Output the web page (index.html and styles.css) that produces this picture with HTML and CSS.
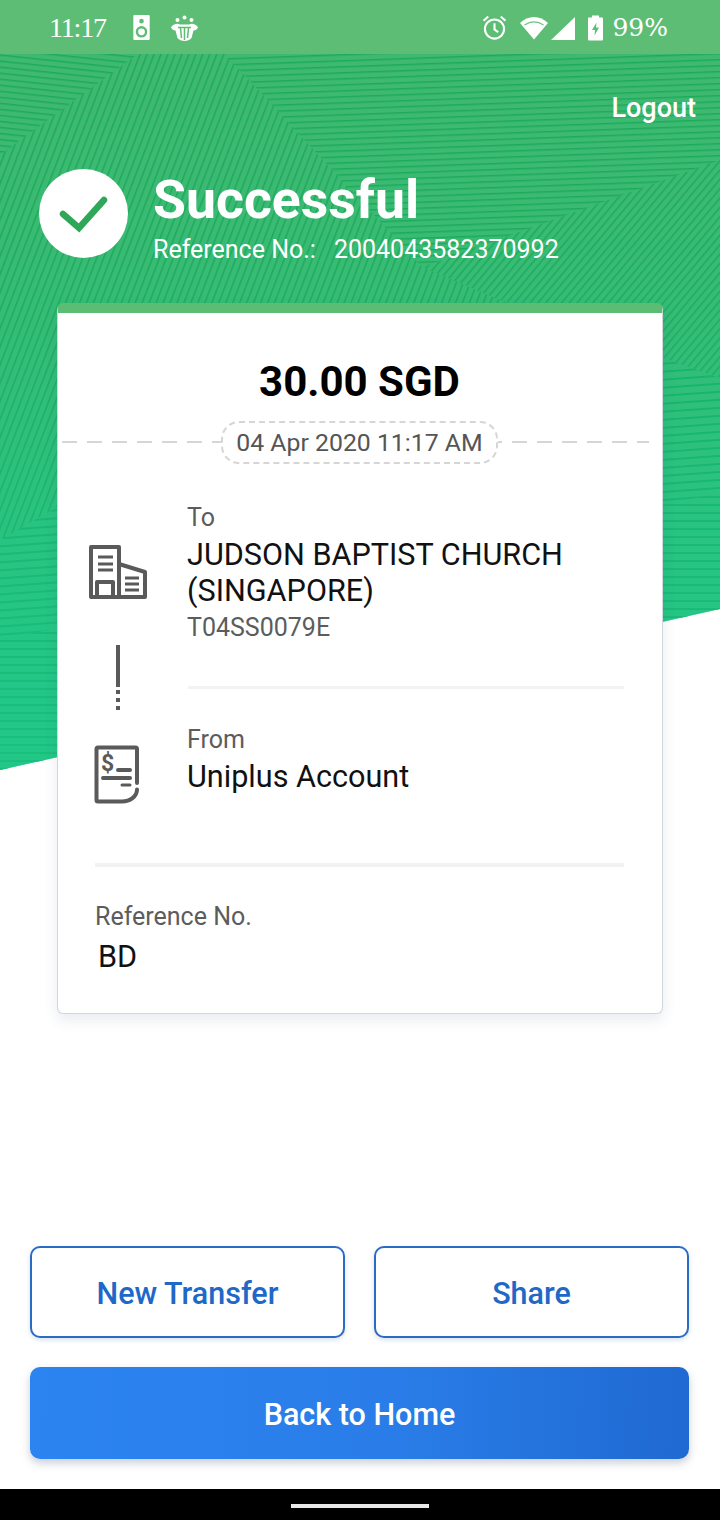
FILE: index.html
```html
<!DOCTYPE html>
<html lang="en">
<head>
<meta charset="utf-8">
<title>Transfer Successful</title>
<link rel="stylesheet" href="styles.css">
</head>
<body>
<div class="screen">
  <svg class="backdrop" width="720" height="720" viewBox="0 54 720 720" aria-hidden="true">
    <defs>
      <linearGradient id="bg" gradientUnits="userSpaceOnUse" x1="0" y1="54" x2="0" y2="770">
        <stop offset="0" stop-color="#40b870"/>
        <stop offset="0.45" stop-color="#35bc77"/>
        <stop offset="1" stop-color="#20c888"/>
      </linearGradient>
      <linearGradient id="fade" gradientUnits="userSpaceOnUse" x1="0" y1="250" x2="0" y2="770">
        <stop offset="0" stop-color="#20c888" stop-opacity="0"/>
        <stop offset="1" stop-color="#20c888" stop-opacity=".6"/>
      </linearGradient>
      <pattern id="topLeft" width="60" height="6" patternUnits="userSpaceOnUse" patternTransform="rotate(6)">
        <rect width="60" height="1.500" fill="#1cab5b"/>
      </pattern>
      <pattern id="topRight" width="60" height="6" patternUnits="userSpaceOnUse" patternTransform="rotate(-2)">
        <rect width="60" height="1.500" fill="#1cab5b"/>
      </pattern>
      <pattern id="centre" width="6.500" height="60" patternUnits="userSpaceOnUse" patternTransform="rotate(21)">
        <rect width="1.500" height="60" fill="#1cab5b"/>
      </pattern>
      <pattern id="midRight" width="6" height="60" patternUnits="userSpaceOnUse" patternTransform="rotate(40)">
        <rect width="1.500" height="60" fill="#1cab5b"/>
      </pattern>
      <pattern id="lower" width="60" height="8" patternUnits="userSpaceOnUse" patternTransform="rotate(-4)">
        <rect width="60" height="2" fill="#14b26a"/>
      </pattern>
      <pattern id="lowest" width="60" height="8" patternUnits="userSpaceOnUse">
        <rect width="60" height="2" fill="#14b26a"/>
      </pattern>
    </defs>
    <polygon points="0,54 720,54 720,609 0,770" fill="url(#bg)"/>
    <polygon points="0,54 138,54 0,155" fill="url(#topLeft)"/>
    <polygon points="225,54 720,54 720,160 422,267 335,173" fill="url(#topRight)"/>
    <polygon points="138,54 225,54 335,173 422,267 500,300 663,358 57,507 0,540 0,155" fill="url(#centre)"/>
    <polygon points="422,267 720,160 720,378 663,358 500,300" fill="url(#midRight)"/>
    <polygon points="0,540 57,507 663,358 720,378 720,493 0,640" fill="url(#lower)"/>
    <polygon points="0,640 720,493 720,609 0,770" fill="url(#lowest)"/>
    <polygon points="0,54 720,54 720,609 0,770" fill="url(#fade)"/>
  </svg>

  <header class="status">
    <div class="status-left">
      <span class="clock">11:17</span>
      <svg class="ico" width="18" height="25" viewBox="0 0 18 26"><path fill="#fff" fill-rule="evenodd" d="M1 0h15a1 1 0 0 1 1 1v24a1 1 0 0 1-1 1H1a1 1 0 0 1-1-1V1a1 1 0 0 1 1-1zm7.500 4a2.400 2.400 0 1 0 0 4.800a2.400 2.400 0 0 0 0-4.800zm0 7.500a6 6 0 1 0 0 12 6 6 0 0 0 0-12zm0 2.500a3.500 3.500 0 1 1 0 7 3.500 3.500 0 0 1 0-7z"/></svg>
      <svg class="ico ico-club" width="27" height="26" viewBox="0 0 27 26"><g fill="#fff"><circle cx="6.500" cy="5" r="2"/><circle cx="13.500" cy="2.500" r="2"/><circle cx="20.500" cy="5" r="2"/><path d="M0 12.500C2 9 6 8 9 9.500h9C21 8 25 9 27 12.500c-1 2-2.500 3-4.500 3l-2 7.500c-3 4-11 4-14 0l-2-7.500c-2 0-3.500-1-4.500-3z"/></g><g stroke="#5ebd75" stroke-width="1.500" fill="none"><path d="M7 12.500h13"/><path d="M9.500 13l1 10M13.500 13v12M17.500 13l-1 10"/></g></svg>
    </div>
    <div class="status-right">
      <svg width="25" height="25" viewBox="0 0 24 24" fill="none" stroke="#fff" stroke-width="2"><circle cx="12" cy="13.500" r="9.200"/><path d="M12 8v6l3.500 2.500M1.500 5.500 6 1.500M22.500 5.500 18 1.500"/></svg>
      <svg class="wifi" width="28" height="24" viewBox="0 0 28 24"><path fill="#fff" d="M14 23.500 0 7C4 3 9 1 14 1s10 2 14 6z"/><path fill="none" stroke="#5ebd75" stroke-width="1.300" d="M4.500 9c6-4 13-4 19 0" opacity=".9"/></svg>
      <svg class="signal" width="24" height="24" viewBox="0 0 24 24"><path fill="#fff" d="M24 1v23H0z"/></svg>
      <svg class="batt" width="15" height="26" viewBox="0 0 15 25"><path fill="#fff" fill-rule="evenodd" d="M4 0h7v2h3a1 1 0 0 1 1 1v21a1 1 0 0 1-1 1H1a1 1 0 0 1-1-1V3a1 1 0 0 1 1-1h3zm4.500 7L4 14.500h3L6.500 20 11 12H8z"/></svg>
      <span class="pct">99%</span>
    </div>
  </header>

  <div class="hero">
    <div class="logout">Logout</div>
    <div class="result">
      <div class="tick">
        <svg width="50" height="38" viewBox="0 0 50 38"><path d="M4 19l16 14L45 5" fill="none" stroke="#2ea858" stroke-width="6.500" stroke-linecap="round"/></svg>
      </div>
      <div class="result-text">
        <h1>Successful</h1>
        <p class="refline"><span>Reference No.:</span><span>2004043582370992</span></p>
      </div>
    </div>
  </div>

  <main class="card">
    <div class="amount">30.00 SGD</div>
    <div class="date-row"><span class="date">04 Apr 2020 11:17 AM</span></div>

    <section class="party party-to">
      <div class="party-icon">
        <svg width="60" height="54" viewBox="0 0 60 54" fill="none" stroke="#5a5a5a" stroke-width="4" stroke-linejoin="round"><path d="M2 2h28v50H2z"/><path d="M30 19l26 8v25H30"/><path d="M9 12h15M9 19h15M9 25h15" stroke-width="3"/><path d="M8 52V37h16v15"/><path d="M36 33h14M36 39h14M36 45h14" stroke-width="3"/></svg>
      </div>
      <div class="party-body">
        <div class="label">To</div>
        <div class="name">JUDSON BAPTIST CHURCH (SINGAPORE)</div>
        <div class="sub">T04SS0079E</div>
      </div>
    </section>

    <div class="connector-row">
      <div class="connector"></div>
      <div class="rule"></div>
    </div>

    <section class="party party-from">
      <div class="party-icon">
        <svg width="46" height="60" viewBox="0 0 46 60" fill="none" stroke="#5a5a5a" stroke-width="4" stroke-linejoin="round" stroke-linecap="round"><path d="M43 38V4a1.500 1.500 0 0 0-1.500-1.500H4A1.500 1.500 0 0 0 2.500 4v51A1.500 1.500 0 0 0 4 56.500h24c8 0 15-5 15-12"/><path d="M24 25h12M9 33h27"/><path d="M28 40h8" stroke-width="3"/><text x="7" y="26" class="dollar">$</text></svg>
      </div>
      <div class="party-body">
        <div class="label">From</div>
        <div class="name">Uniplus Account</div>
      </div>
    </section>

    <div class="note">
      <div class="label">Reference No.</div>
      <div class="name note-val">BD</div>
    </div>
  </main>

  <footer class="actions">
    <div class="action-row">
      <button class="btn btn-outline">New Transfer</button>
      <button class="btn btn-outline">Share</button>
    </div>
    <button class="btn btn-primary">Back to Home</button>
  </footer>

  <div class="navbar"><span class="pill"></span></div>
</div>
</body>
</html>
```
FILE: styles.css
```css
* { box-sizing: border-box; }
html, body { margin: 0; padding: 0; background: #fff; }
body { font-family: Roboto, "Liberation Sans", sans-serif; }
.screen { position: relative; width: 720px; height: 1520px; display: flex; flex-direction: column; overflow: hidden; }
.backdrop { position: absolute; left: 0; top: 54px; }
.status { position: relative; height: 54px; flex: none; background: #5ebd75; display: flex; justify-content: space-between; align-items: center; padding: 1px 52px 0 49px; color: #fff; }
.status-left, .status-right { display: flex; align-items: center; }
.clock { font-family: "Liberation Serif", "DejaVu Serif", serif; font-size: 28px; line-height: 30px; letter-spacing: -1.200px; }
.pct { font-family: "DejaVu Serif", serif; font-size: 25px; line-height: 30px; margin-left: 9px; }
.ico { margin-left: 27px; }
.ico-club { margin-left: 20px; }
.wifi { margin-left: 13px; }
.signal { margin-left: 3px; }
.batt { margin-left: 13px; }
.hero { position: relative; padding: 0 24px 0 39px; height: 249px; flex: none; color: #fff; }
.logout { text-align: right; font-size: 27px; font-weight: 500; line-height: 30px; padding-top: 39px; height: 115px; }
.result { display: flex; align-items: flex-start; gap: 25px; }
.tick { width: 89px; height: 89px; border-radius: 50%; background: #fff; display: flex; align-items: center; justify-content: center; flex: none; }
.result-text { padding-top: 3px; }
h1 { margin: 0; font-size: 53.600px; line-height: 56px; font-weight: 700; }
.refline { margin: 8px 0 0; font-size: 25px; line-height: 28px; display: flex; gap: 18px; }
.card { position: relative; width: 606px; height: 711px; margin-left: 57px; flex: none; background: #fff; border: 1px solid #d2d5dc; border-top: 10px solid #5bbc74; border-radius: 6px; box-shadow: 0 6px 14px rgba(70,90,130,.12); padding: 45px 38px 0 37px; }
.amount { text-align: center; font-size: 42px; line-height: 48px; font-weight: 700; color: #000; }
.date-row { position: relative; margin: 15px -33px 0 -33px; height: 44px; display: flex; justify-content: center; background: repeating-linear-gradient(90deg, #d6d6d6 0 15px, transparent 15px 25px) 0 20px / 587px 2px no-repeat; }
.date { padding: 0 13px; height: 43px; line-height: 40px; font-size: 24.800px; color: #555; background: #fff; border: 2px dashed #d6d6d6; border-radius: 18px; }
.party { display: flex; }
.party-icon { width: 92px; flex: none; display: flex; }
.party-to { margin-top: 38px; min-height: 183px; }
.party-to .party-icon { margin-left: -6px; width: 98px; padding-top: 42px; align-items: flex-start; }
.party-from { height: 177px; padding-top: 39px; }
.party-from .party-icon { margin-left: -1px; width: 93px; padding-top: 20px; align-items: flex-start; }
.party-body { flex: 1; }
.label { font-size: 25px; line-height: 30px; color: #5c5c5c; }
.name { font-size: 30.600px; line-height: 36px; color: #111; }
.party-to .name { margin-top: 4px; width: 400px; }
.party-from .name { margin-top: 4px; }
.sub { margin-top: 1px; font-size: 25px; line-height: 36px; color: #5c5c5c; }
.connector-row { display: flex; align-items: flex-start; height: 0; }
.connector { width: 4px; height: 66px; margin: -41px 0 0 21px; flex: none; background: linear-gradient(#5a5a5a, #5a5a5a) 0 0 / 4px 42px no-repeat, repeating-linear-gradient(#5a5a5a 0 4px, transparent 4px 8px) 0 45px / 4px 21px no-repeat; }
.rule { width: 436px; height: 3px; margin-left: 68px; background: #f2f2f2; }
.note { border-top: 4px solid #f2f2f2; padding-top: 35px; }
.note-val { margin: 7px 0 0 3px; }
.actions { flex: none; padding: 0 31px 0 30px; margin-top: 232px; display: flex; flex-direction: column; gap: 29px; }
.action-row { display: flex; gap: 29px; }
.btn { font-family: Roboto, "Liberation Sans", sans-serif; font-size: 30.500px; font-weight: 500; border-radius: 10px; cursor: pointer; padding: 2px 0 0; }
.btn-outline { flex: 1; height: 92px; background: #fff; color: #2068c8; border: 2px solid #2a6cc4; box-shadow: 0 2px 5px rgba(40,80,150,.18); }
.btn-primary { width: 100%; height: 92px; border: 0; color: #fff; background: linear-gradient(92deg, #2b84f1, #2a7de8 55%, #1f69d2); box-shadow: 0 4px 8px rgba(40,60,100,.25); }
.navbar { position: absolute; left: 0; right: 0; bottom: 0; height: 31px; background: #000; display: flex; justify-content: center; }
.pill { width: 138px; height: 4px; margin-top: 15px; background: #e8e8e8; }
.dollar { font-family: Roboto, sans-serif; font-size: 23px; font-weight: 700; fill: #5a5a5a; stroke: none; }
```
